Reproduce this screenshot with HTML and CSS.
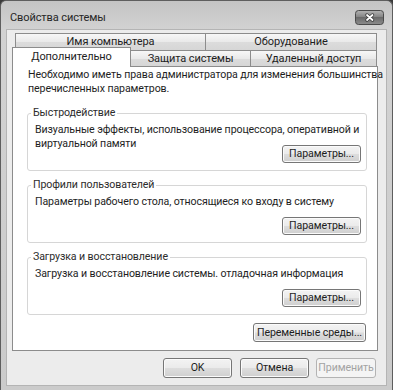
FILE: index.html
```html
<!DOCTYPE html>
<html lang="ru">
<head>
<meta charset="utf-8">
<title>Свойства системы</title>
<link rel="stylesheet" href="styles.css">
</head>
<body>
<div class="window">
  <div class="titlebar">
    <span class="title">Свойства системы</span>
    <div class="close">
      <svg width="29" height="15" viewBox="0 0 29 15">
        <defs>
          <linearGradient id="cg" x1="0" y1="0" x2="0" y2="1">
            <stop offset="0" stop-color="#b4b4b4"/>
            <stop offset="0.45" stop-color="#858585"/>
            <stop offset="0.5" stop-color="#6a6a6a"/>
            <stop offset="1" stop-color="#8c8c8c"/>
          </linearGradient>
        </defs>
        <rect x="0.5" y="0.5" width="28" height="14" rx="3" fill="url(#cg)" stroke="#4a4a4a"/>
        <path d="M12 5 L17.5 10 M17.5 5 L12 10" stroke="#3c3c3c" stroke-width="3.4" stroke-linecap="round"/>
        <path d="M12 5 L17.5 10 M17.5 5 L12 10" stroke="#ffffff" stroke-width="1.8" stroke-linecap="round"/>
      </svg>
    </div>
  </div>
  <div class="client">
    <div class="tabs">
      <div class="row1">
        <div class="tab t-name">Имя компьютера</div>
        <div class="tab t-hw">Оборудование</div>
      </div>
      <div class="row2">
        <div class="tab sel">Дополнительно</div>
        <div class="tab t-prot">Защита системы</div>
        <div class="tab t-remote">Удаленный доступ</div>
      </div>
    </div>
    <div class="panel">
      <p class="intro">Необходимо иметь права администратора для изменения большинства<br>перечисленных параметров.</p>
      <div class="group first">
        <span class="legend">Быстродействие</span>
        <p class="gtext">Визуальные эффекты, использование процессора, оперативной и<br>виртуальной памяти</p>
        <button class="btn gbtn">Параметры...</button>
      </div>
      <div class="group">
        <span class="legend">Профили пользователей</span>
        <p class="gtext">Параметры рабочего стола, относящиеся ко входу в систему</p>
        <button class="btn gbtn">Параметры...</button>
      </div>
      <div class="group">
        <span class="legend">Загрузка и восстановление</span>
        <p class="gtext">Загрузка и восстановление системы. отладочная информация</p>
        <button class="btn gbtn">Параметры...</button>
      </div>
      <button class="btn env">Переменные среды...</button>
    </div>
    <div class="footer">
      <button class="btn fbtn">OK</button>
      <button class="btn fbtn">Отмена</button>
      <button class="btn fbtn apply" disabled>Применить</button>
    </div>
  </div>
</div>
</body>
</html>
```
FILE: styles.css
```css
* { box-sizing: border-box; }
html, body { margin: 0; padding: 0; }
body {
  width: 393px;
  height: 390px;
  overflow: hidden;
  background: #3a3a3a;
  font-family: Roboto, "Noto Sans", sans-serif;
  font-size: 10.6px;
  letter-spacing: -0.1px;
  color: #1e1e1e;
}
.window {
  width: 393px;
  height: 390px;
  border: 1px solid #5e5e5e;
  border-bottom: none;
  border-radius: 6px 6px 0 0;
  background: linear-gradient(#c4c4c4, #d2d2d2 28px, #cbcbcb);
  padding: 0 6px 5px 6px;
  display: flex;
  flex-direction: column;
}
.titlebar {
  height: 29px;
  display: flex;
  align-items: flex-start;
  justify-content: space-between;
  padding: 9px 2px 0 3px;
}
.title {
  line-height: 15px;
  font-size: 11px;
  color: #262626;
}
.close { width: 29px; height: 15px; }
.close svg { display: block; }
.client {
  flex: 1;
  background: #ececec;
  box-shadow: 0 0 0 1px #b4b4b4;
  padding: 3px 0 0 5px;
  display: flex;
  flex-direction: column;
}
.tabs { position: relative; z-index: 2; }
.row1 { display: flex; margin-left: 3px; height: 17px; }
.tab {
  border: 1px solid #8c8c8c;
  border-bottom: none;
  background: linear-gradient(#f7f7f7, #e9e9e9 50%, #dcdcdc 51%, #d6d6d6);
  text-align: center;
  white-space: nowrap;
  color: #1e1e1e;
  font-size: 11px;
}
.row1 .tab { height: 17px; line-height: 15px; }
.t-name { width: 191px; }
.t-hw { width: 172px; margin-left: -1px; }
.row2 {
  display: flex;
  align-items: flex-start;
  margin-top: -3px;
  height: 20px;
}
.row2 .tab { height: 16px; margin-top: 3px; line-height: 15px; }
.row2 .tab.sel {
  height: 20px;
  margin-top: 0;
  width: 119px;
  background: #ffffff;
  line-height: 18px;
  position: relative;
  z-index: 2;
}
.t-prot { width: 121px; margin-left: -1px; }
.t-remote { width: 127px; margin-left: -1px; }
.panel {
  margin-top: -1px;
  width: 366px;
  height: 285px;
  background: #ffffff;
  border: 1px solid #8c8c8c;
  padding: 1px 0 0 14px;
  display: flex;
  flex-direction: column;
  align-items: flex-start;
}
.intro {
  margin: 0;
  padding-left: 1px;
  line-height: 14px;
  white-space: nowrap;
}
.group {
  margin-top: 14px;
  width: 340px;
  border: 1px solid #d6d6d6;
  border-radius: 3px;
  padding: 0 5px 7px 7px;
  display: flex;
  flex-direction: column;
  align-items: flex-start;
}
.group.first { margin-top: 17px; }
.legend {
  margin-top: -8px;
  margin-left: -4px;
  padding: 0 2px;
  line-height: 14px;
  background: #ffffff;
  color: #2c2c2c;
  white-space: nowrap;
}
.gtext {
  margin: 3px 0 0 0;
  line-height: 14px;
  min-height: 28px;
  white-space: nowrap;
}
.btn {
  font-family: inherit;
  font-size: 10.6px;
  letter-spacing: -0.1px;
  color: #1e1e1e;
  padding: 0;
  border: 1px solid #767676;
  border-radius: 3px;
  background: linear-gradient(#f3f3f3, #ebebeb 48%, #dddddd 52%, #cfcfcf);
  box-shadow: inset 0 0 0 1px #fbfbfb;
  text-align: center;
  white-space: nowrap;
}
.gbtn {
  align-self: flex-end;
  margin-top: -6px;
  width: 79px;
  height: 18px;
  line-height: 16px;
}
.env {
  align-self: flex-end;
  margin-top: 8px;
  margin-right: 11px;
  width: 113px;
  height: 19px;
  line-height: 17px;
}
.footer {
  display: flex;
  margin-top: 7px;
  padding-left: 151px;
}
.fbtn {
  height: 20px;
  line-height: 18px;
  width: 69px;
  margin-right: 8px;
}
.fbtn:nth-child(2) { margin-right: 7px; }
.apply {
  width: 60px;
  color: #a3a3a3;
  border-color: #b3b3b3;
  background: #f4f4f4;
  box-shadow: none;
}
```
